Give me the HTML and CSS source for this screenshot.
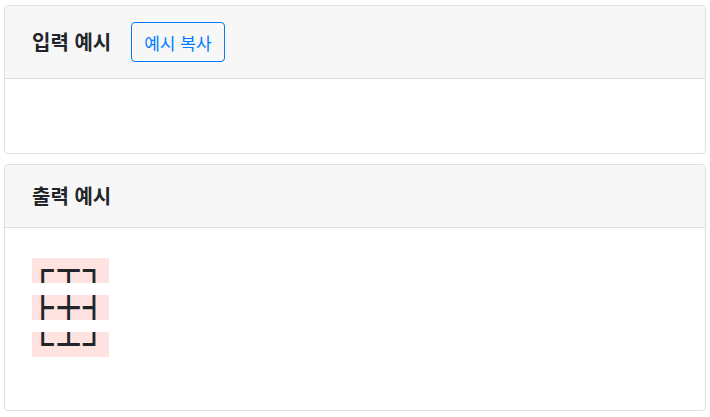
FILE: index.html
```html
<!DOCTYPE html>
<html lang="ko">
<head>
<meta charset="utf-8">
<link rel="stylesheet" href="styles.css">
</head>
<body>
<section class="card">
  <div class="card-header">
    <h3 class="title">입력 예시</h3>
    <button class="btn-copy" type="button">예시 복사</button>
  </div>
  <div class="card-body"><pre class="sample empty"></pre></div>
</section>
<section class="card">
  <div class="card-header">
    <h3 class="title">출력 예시</h3>
  </div>
  <div class="card-body">
    <pre class="sample"><span class="ln">┌┬┐</span>
<span class="ln">├┼┤</span>
<span class="ln">└┴┘</span></pre>
  </div>
</section>
</body>
</html>
```

FILE: styles.css
```css
* { box-sizing: border-box; }
body {
  margin: 0;
  padding: 5px 4px;
  background: #fff;
  color: #212529;
  font-family: "Noto Sans CJK KR", "Noto Sans", sans-serif;
}
.card {
  border: 1px solid #dfdfdf;
  border-radius: 4px;
  margin-bottom: 10px;
  overflow: hidden;
}
.card-header {
  display: flex;
  align-items: center;
  gap: 20px;
  padding: 16px 27px;
  background: #f7f7f7;
  border-bottom: 1px solid #dfdfdf;
}
.title {
  margin: 0;
  font-size: 20px;
  font-weight: 700;
  line-height: 30px;
}
.btn-copy {
  height: 40px;
  padding: 0 12px;
  border: 1px solid #007bff;
  border-radius: 4px;
  background: transparent;
  color: #007bff;
  font-family: inherit;
  font-size: 17px;
}
.card-body {
  padding: 24px 27px;
}
.sample {
  margin: 0 0 23px;
  font-family: "DejaVu Sans Mono", monospace;
  color: #212529;
}
.sample.empty { height: 26px; margin: 0; }
.ln {
  display: inline-block;
  height: 25px;
  line-height: 25px;
  margin: 6px 0;
  overflow: hidden;
  background: #ffe3e0;
  font-size: 36px;
  letter-spacing: 4px;
  vertical-align: top;
}
```
